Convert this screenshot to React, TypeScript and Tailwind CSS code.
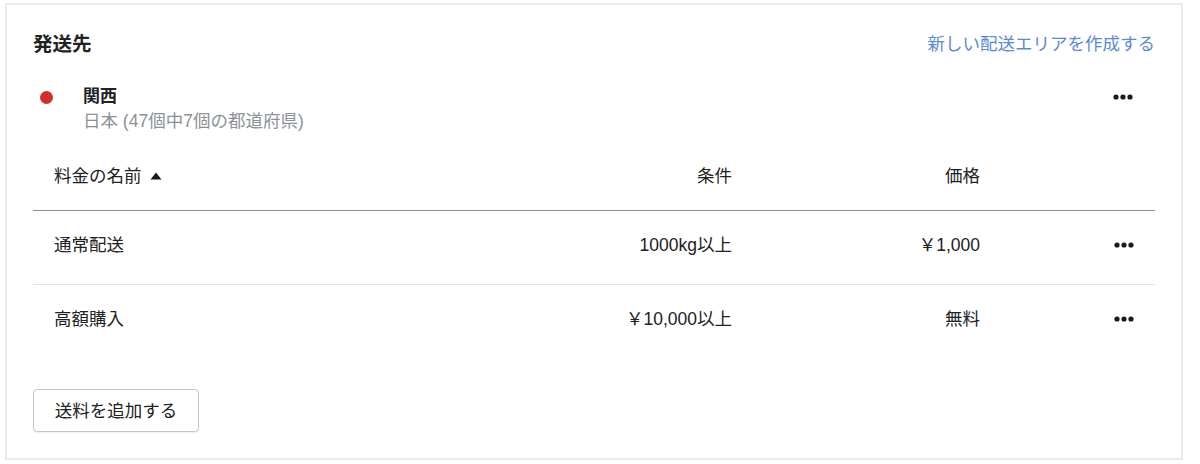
import React from "react";

const Dots = () => (
  <svg width="20" height="6" viewBox="0 0 20 6" className="block">
    <circle cx="3" cy="3" r="2.6" fill="#1a1a1a" />
    <circle cx="10" cy="3" r="2.6" fill="#1a1a1a" />
    <circle cx="17" cy="3" r="2.6" fill="#1a1a1a" />
  </svg>
);

const rows = [
  { name: "通常配送", cond: "1000kg以上", price: "￥1,000" },
  { name: "高額購入", cond: "￥10,000以上", price: "無料" },
];

export default function App() {
  return (
    <div
      className="w-[1200px] h-[464px] bg-white overflow-hidden pl-[5px] pt-[3px]"
      style={{ fontFamily: '"Liberation Sans", "Noto Sans CJK JP", sans-serif' }}
    >
      <div className="w-[1178px] border-2 border-[#ebebeb] bg-white pl-[26px] pr-[26px] pt-[25px] pb-[26px] text-[#202223]">
        <div className="flex items-center justify-between h-[28px]">
          <h2 className="text-[19.5px] font-bold leading-[28px]">発送先</h2>
          <span className="text-[17.5px] leading-[24px] text-[#5b8ad6]">新しい配送エリアを作成する</span>
        </div>

        <div className="mt-[27px] flex items-start">
          <div className="w-[50px] h-[24px] flex items-center pl-[7px]">
            <span className="block w-[13px] h-[13px] rounded-full bg-[#d1302a]" />
          </div>
          <div className="flex-1">
            <div className="text-[17px] font-bold leading-[24px]">関西</div>
            <div className="text-[17.5px] leading-[24px] text-[#8c9196]">日本 (47個中7個の都道府県)</div>
          </div>
          <div className="h-[24px] flex items-center pr-[22px]">
            <Dots />
          </div>
        </div>

        <div className="mt-[10px]">
          <div className="flex items-center px-[21px] pt-[21px] pb-[22px] border-b border-[#8c8c8c] text-[17.5px] leading-[24px]">
            <div className="w-[478px] flex items-center gap-[8px]">
              <span>料金の名前</span>
              <svg width="12" height="8" viewBox="0 0 12 8" className="block">
                <path d="M6 0.5 L11.5 7.5 L0.5 7.5 Z" fill="#1a1a1a" />
              </svg>
            </div>
            <div className="w-[200px] text-right">条件</div>
            <div className="w-[248px] text-right">価格</div>
            <div className="flex-1" />
          </div>
          {rows.map((r, i) => (
            <div
              key={r.name}
              className={`flex items-center px-[21px] pt-[22px] pb-[27px] text-[17.5px] leading-[24px] ${
                i === 0 ? "border-b border-[#e1e3e5]" : ""
              }`}
            >
              <div className="w-[478px]">{r.name}</div>
              <div className="w-[200px] text-right">{r.cond}</div>
              <div className="w-[248px] text-right">{r.price}</div>
              <div className="flex-1 flex justify-end">
                <Dots />
              </div>
            </div>
          ))}
        </div>

        <div className="mt-[31px]">
          <button className="w-[166px] h-[43px] border border-[#c4c4c4] rounded-[4px] bg-white text-[17.5px] leading-[24px] text-[#202223] shadow-[0_1px_0_rgba(0,0,0,0.05)]">
            送料を追加する
          </button>
        </div>
      </div>
    </div>
  );
}
